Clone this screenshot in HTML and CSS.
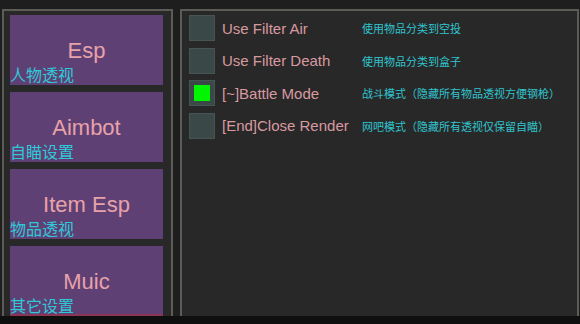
FILE: index.html
```html
<!DOCTYPE html>
<html lang="en">
<head>
  <meta charset="UTF-8">
  <title>Menu</title>
  <link rel="stylesheet" href="styles.css">
</head>
<body>
  <div class="window">
    <div class="sidebar">
      <div class="menu-btn">
        <span class="menu-name">Esp</span>
        <span class="menu-sub">人物透视</span>
      </div>
      <div class="menu-btn">
        <span class="menu-name">Aimbot</span>
        <span class="menu-sub">自瞄设置</span>
      </div>
      <div class="menu-btn">
        <span class="menu-name">Item Esp</span>
        <span class="menu-sub">物品透视</span>
      </div>
      <div class="menu-btn last">
        <span class="menu-name">Muic</span>
        <span class="menu-sub">其它设置</span>
      </div>
    </div>

    <div class="content">
      <div class="option">
        <span class="check"></span>
        <span class="option-label">Use Filter Air</span>
        <span class="option-desc">使用物品分类到空投</span>
      </div>
      <div class="option">
        <span class="check"></span>
        <span class="option-label">Use Filter Death</span>
        <span class="option-desc">使用物品分类到盒子</span>
      </div>
      <div class="option">
        <span class="check on"></span>
        <span class="option-label">[~]Battle Mode</span>
        <span class="option-desc">战斗模式（隐藏所有物品透视方便钢枪）</span>
      </div>
      <div class="option">
        <span class="check"></span>
        <span class="option-label">[End]Close Render</span>
        <span class="option-desc">网吧模式（隐藏所有透视仅保留自瞄）</span>
      </div>
    </div>
  </div>
  <div class="bottom-strip"></div>
</body>
</html>
```

FILE: styles.css
```css
body {
  margin: 0;
  width: 580px;
  height: 324px;
  background: #1e1e1e;
  font-family: 'Liberation Sans', Arial, 'Noto Sans CJK SC', sans-serif;
  overflow: hidden;
}

.window {
  display: flex;
  gap: 7px;
  height: 316px;
  padding: 9px 0 0 2px;
  box-sizing: border-box;
}

.sidebar {
  width: 171px;
  box-sizing: border-box;
  border: 2px solid #5c5c57;
  border-bottom: none;
  background: #282828;
  padding: 4px 8px 0 6px;
  display: flex;
  flex-direction: column;
  gap: 7px;
  overflow: hidden;
}

.menu-btn {
  display: grid;
  height: 70px;
  flex-shrink: 0;
  background: #5f4074;
}

.menu-btn.last {
  box-shadow: inset 0 -2px 0 #8a3555;
}

.menu-name {
  grid-area: 1 / 1;
  align-self: center;
  justify-self: center;
  font-size: 22px;
  color: #e8a2aa;
  padding-top: 2px;
}

.menu-sub {
  grid-area: 1 / 1;
  align-self: end;
  justify-self: start;
  font-size: 16px;
  line-height: 16px;
  color: #30c8d8;
  padding-bottom: 1px;
}

.content {
  flex: 1;
  margin-right: 1px;
  box-sizing: border-box;
  border: 2px solid #5c5c57;
  border-bottom: none;
  background: #282828;
  padding: 4px 0 0 7px;
  display: flex;
  flex-direction: column;
  gap: 6.5px;
}

.option {
  display: flex;
  align-items: center;
  height: 26px;
}

.check {
  width: 26px;
  height: 26px;
  box-sizing: border-box;
  background: #3a4948;
  border: 1px solid #465554;
  display: flex;
  align-items: center;
  justify-content: center;
  margin-right: 7px;
}

.check.on::after {
  content: "";
  width: 16px;
  height: 16px;
  background: #00f500;
}

.option-label {
  width: 140px;
  font-size: 15px;
  color: #d89aa0;
}

.option-desc {
  font-size: 11px;
  color: #30c4ce;
}

.bottom-strip {
  height: 8px;
  background: #0f0f0f;
}
```
